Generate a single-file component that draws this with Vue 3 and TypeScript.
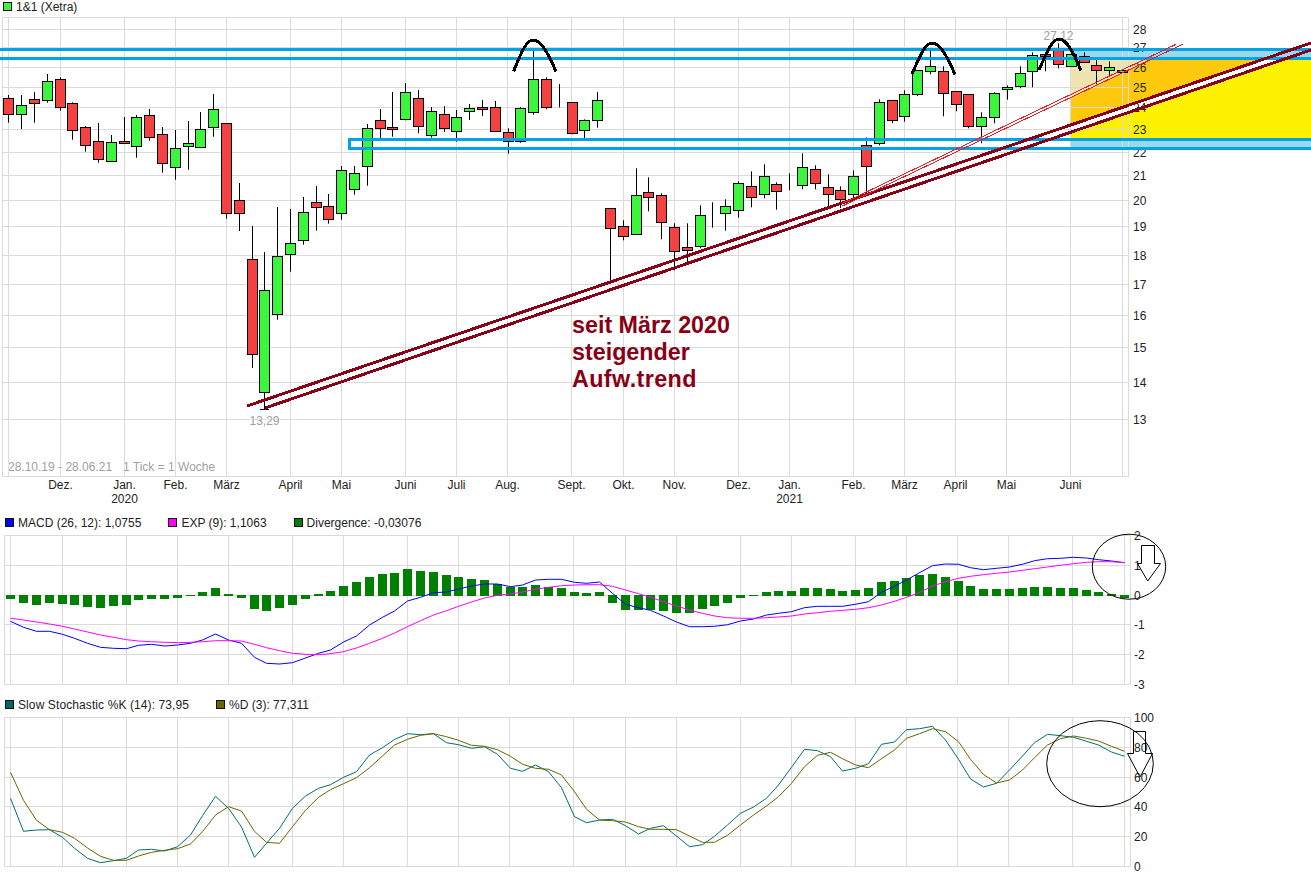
<script setup lang="ts">
type Kind = 'r' | 'g' | 'd'
type Candle = [Kind, number, number, number, number]

const xAt = (i: number): number => 8.5 + 13 * i - Math.floor(i / 5)
const pix = (v: number): number => Math.floor(v) + 0.5

const raw: Candle[] = [
  ['r',98.3,114.3,95,122.7],['g',105.3,114.3,95,129],['r',99.3,103.3,92,122.7],['g',81.3,100.3,74,102.7],
  ['r',79.3,107.3,77.3,110.7],['r',103.3,130.3,102.3,139.7],['r',127.3,145.3,126,151.7],['r',141.3,159.3,123,162.7],
  ['g',142.3,161.3,135,161.3],['r',141.3,143.3,117,143.3],['g',117.3,146.3,115,157.7],['r',115.3,137.3,109,140.7],
  ['r',134.3,163.3,127,172.7],['g',148.3,167.3,130,179.7],['g',143.3,146.3,121,169.7],['g',129.3,147.3,112,147.3],
  ['g',109.3,127.3,94,136.7],['r',123.3,213.3,123.3,218.7],['r',200.3,213.3,183,231],['r',259.3,354.3,226,368],
  ['g',290.3,392.3,252,409.3],['g',256.3,314.3,207,319.7],['g',243.3,254.3,209,271.7],['g',212.3,240.3,197,244.7],
  ['r',202.3,207.3,186,230.7],['r',206.3,219.3,194,223.7],['g',170.3,213.3,166,219.7],['g',173.3,189.3,166,194.7],
  ['g',128.3,166.3,124,185.7],['r',120.3,128.3,109,138],['r',127.3,129.3,92,136.7],['g',92.3,119.3,83,120.3],
  ['r',98.3,126.3,90,133.3],['g',111.3,135.3,107,137.7],['r',114.3,128.3,106,132],['g',117.3,131.3,110,141.7],
  ['g',108.3,111.3,104,120],['r',107.3,109.3,100,116],['r',107.3,131.3,101,131.3],['r',132.3,141.3,128.3,153.7],
  ['g',108.3,141.3,107,142.7],['g',79.3,112.3,50,114.7],['r',79.3,107.3,77.3,109.3],['d',105.3,105.3,84,107.3],
  ['r',102.3,133.3,102.3,134.3],['g',120.3,130.3,119.3,138],['g',100.3,120.3,92,127.7],['r',208.3,228.3,208.3,283],
  ['r',226.3,236.3,220.3,240.3],['g',195.3,234.3,168.3,234.3],['r',192.3,197.3,177.3,211.3],['r',195.3,222.3,193.3,239.3],
  ['r',227.3,251.3,223.3,270.3],['r',247.3,250.3,223.3,263],['g',215.3,246.3,205.3,248.3],['d',216.3,216.3,202.3,227.7],
  ['g',206.3,213.3,199.3,230.7],['g',183.3,210.3,181.3,217.7],['r',186.3,197.3,171.3,207.3],['g',176.3,194.3,164.3,198.3],
  ['r',184.3,191.3,182.3,209.7],['d',189.3,189.3,173.3,190.3],['g',167.3,185.3,153.3,189.3],['r',169.3,183.3,165.3,189.3],
  ['r',187.3,194.3,174.3,208],['r',190.3,199.3,186.3,208],['g',176.3,194.3,170.3,198.3],['r',145.3,166.3,137.3,193.3],
  ['g',102.3,143.3,99.3,145.3],['r',100.3,120.3,100.3,123.3],['g',94.3,116.3,90.3,121.7],['g',70.3,94.3,70.3,96],
  ['g',66.3,71.3,51,74.3],['r',71.3,93.3,66.3,116.3],['r',91.3,104.3,91.3,111.3],['r',94.3,126.3,94.3,128.3],
  ['g',117.3,126.3,112.3,143.3],['g',93.3,117.3,92.3,123.3],['g',87.3,89.3,85.3,99.7],['g',73.3,86.3,66.3,88.3],
  ['g',55.3,71.3,52.3,87.3],['r',54.3,56.3,52,71.3],['r',48.3,64.3,43.3,68.3],['g',54.3,66.3,54.3,66.3],
  ['r',56.3,62.3,52.3,62.3],['r',65.3,70.3,59.3,84.3],['g',67.3,70.3,61.3,76.3],['g',70.3,72.3,70.3,72.3]
]

const candles = raw.map(([kind, t, b, wt, wb], i) => ({
  id: i, kind, x: xAt(i), top: pix(t), height: Math.floor(b) - Math.floor(t), wt, wb
}))

const monthXs = [60.5,124.5,175.5,226.5,290.5,341.5,405.5,456.5,507.5,571.5,623.5,674.5,738.5,789.5,853.5,904.5,955.5,1006.5,1070.5]
const mainVerticals = [2.5, 8.5, ...monthXs, 1122.5, 1128.5]
const lowVerticals = [4.5, 10.5, ...monthXs.map((x) => x + 2), 1124.5, 1130.5]

const months = [
  ['Dez.',60.5],['Jan.',124.5],['Feb.',175.5],['März',226.5],['April',290.5],['Mai',341.5],['Juni',405.5],
  ['Juli',456.5],['Aug.',507.5],['Sept.',571.5],['Okt.',623.5],['Nov.',674.5],['Dez.',738.5],['Jan.',789.5],
  ['Feb.',853.5],['März',904.5],['April',955.5],['Mai',1006.5],['Juni',1070.5]
] as [string, number][]
const years = [['2020',124.5],['2021',789.5]] as [string, number][]

const priceTicks = [
  [28,29.5],[27,47.5],[26,67.5],[25,87.5],[24,107.5],[23,129.5],[22,152.5],[21,175.5],[20,200.5],
  [19,226.5],[18,255.5],[17,284.5],[16,315.5],[15,347.5],[14,382.5],[13,419.5]
]
const macdTicks = [[2,535.5],[1,565.5],[0,595.5],[-1,624.5],[-2,654.5],[-3,684.5]]
const stochTicks = [[100,717.5],[80,747.5],[60,777.5],[40,806.5],[20,836.5],[0,866.5]]

const divergence = [
  599,603,605,603,604,605,607,608,606,605,600,599,599,598,596,592,588,594,598,609,611,608,605,599,594,591,586,582,
  577,574,573,569,571,572,575,577,579,580,584,587,587,585,587,588,592,593,592,603,610,610,610,611,613,613,609,606,
  603,598,596,592,591,591,588,588,589,591,590,588,582,581,578,575,574,577,581,586,589,589,589,588,587,587,588,588,
  590,592,594,598
]
const bars = divergence.map((edge, i) => {
  const up = edge < 596
  return { id: i, x: xAt(i) - 2.5, y: up ? edge : 595, height: up ? 596 - edge : edge - 595 }
})

const macd = [
  621.3,627.3,631.3,631.3,634.3,638.3,643.3,647.3,648.3,648.7,645.3,644.3,646,645,643.3,640,634,640,643.3,657.3,
  663.3,664,662.7,658,653.3,650,642,636,625,617.3,611,601,597.3,592.7,592,589,586,584,584,586.7,585,580,579.3,579.3,
  582.3,583.3,582,593.3,604.3,607.7,610.3,616,622,626.7,626.7,626.3,624.7,621,619,615,613.3,611.7,607.7,606.3,606.3,
  606.3,604.3,601.7,592.3,586.3,580,572.7,565.7,564,564.3,567.7,569.7,568.3,567,564.3,560.7,558.7,558.3,557.3,558,
  559.7,561,562.7
]
const signal = [
  618.3,620,622,624,626.3,629,632,635,637.3,639.7,641,641.7,642.3,642.7,642.3,641.7,640.7,640.7,641,644.3,647.7,
  650.7,653.3,654.3,654.7,653.7,651.7,648,643.3,638.3,633,626.7,620.7,615,610.7,606.3,602,598,595.3,594,592,589.3,
  587.3,585.7,585,584.7,584.7,586.3,590,593.7,597.3,601.7,606,610,613.3,616,617.7,618.3,618.3,617.7,617,616,614,
  612.7,611.3,610.3,609.3,607.7,605,601.3,597.3,592.5,586,581.7,578.3,576.3,574.7,573.3,572,570.3,568.7,567,565.3,
  563.7,562.3,561.7,561.7,562.7
]
const stochK = [
  798.3,831.3,830,829.7,837.3,848.3,858.3,862.7,860.7,858.3,850,849.3,851,846.7,835,815.7,796.3,808.3,827,857.3,
  843.3,828.3,808.3,796,788.3,784.7,777.3,771.7,755,747.7,739.5,733.7,734.7,733.7,742.7,744.7,748.3,746.7,754.3,
  768.3,771.3,765,771.7,787.7,816.7,822.7,820,819.3,825.7,834,828.3,825.7,836,846.7,844.7,836.3,825,813.3,807,798.3,
  785,767.3,749.3,750.7,756.7,771,768.3,763.7,744.3,742,729.7,728.7,726.3,740,759.3,779,787,783.3,770,756,742.7,
  734.3,735.7,737.3,741.3,745,752,756.3
]
const stochD = [
  772.3,800.3,820.3,829.7,832.3,838.3,848,856.3,860.3,860.3,856,852.3,850.3,848.7,844,831.7,815,806.7,811,831.3,
  842.3,843.3,826.7,810.3,797.3,789.7,783.7,777.7,767.7,756,745,739.3,735.3,733.7,736.7,740.3,745.3,746.3,749.7,
  756.3,764.3,768.3,769.3,775,791.7,809.3,820,820.7,822,826.7,829.3,829.3,829.7,836,842.3,842.3,835.3,825,815,806,
  796.7,783.3,766.7,755.3,752.3,758.7,765,767.7,758.7,750,738.3,733.7,728.7,731.7,741.7,759.3,774.5,783,780,770,
  757.7,745,738.7,736,738.3,741,746.3,751.3
]
const toPoints = (vals: number[]): string => vals.map((y, i) => `${xAt(i) + 2},${y}`).join(' ')
const macdPoints = toPoints(macd)
const signalPoints = toPoints(signal)
const kPoints = toPoints(stochK)
const dPoints = toPoints(stochD)
</script>

<template>
  <div class="page">
    <div class="legend legend-main">
      <span class="item"><i class="swatch candle-green"></i>1&amp;1 (Xetra)</span>
    </div>

    <svg class="panel main-panel" viewBox="0 13 1311 501" width="1311" height="501">
      <polygon class="beige" points="1071,60 1150,60 1071,98" />
      <polygon class="orange" points="1071,98 1150,60 1261,60 1071,125" />
      <polygon class="yellow" points="1071,132 1281.6,60 1311,60 1311,139 1071,139" />
      <rect class="sky" x="1071" y="50" width="240" height="9" />
      <rect class="sky" x="1071" y="140" width="240" height="8" />

      <line v-for="x in mainVerticals" :key="x" class="grid" :x1="x" :x2="x" y1="17.5" y2="477" />
      <line class="grid" x1="2.5" x2="1128.5" y1="17.5" y2="17.5" />
      <line class="grid" x1="2.5" x2="1128.5" y1="476.5" y2="476.5" />
      <line v-for="t in priceTicks" :key="t[0]" class="grid" x1="2.5" x2="1128.5" :y1="t[1]" :y2="t[1]" />

      <g v-for="c in candles" :key="c.id">
        <line class="wick" :x1="c.x" :x2="c.x" :y1="c.wt" :y2="c.wb" />
        <rect :class="['body', c.kind]" :x="c.x - 5" :y="c.top" width="10" :height="c.height" />
      </g>
      <line class="wick" x1="260" x2="269" y1="409.5" y2="409.5" />

      <text v-for="t in priceTicks" :key="t[0]" class="label" x="1133" :y="t[1] + 4.5">{{ t[0] }}</text>
      <text v-for="(m, i) in months" :key="i" class="label mid" :x="m[1]" y="489">{{ m[0] }}</text>
      <text v-for="y in years" :key="y[0]" class="label mid" :x="y[1]" y="503">{{ y[0] }}</text>

      <text class="faint" x="8" y="471">28.10.19 - 28.06.21</text>
      <text class="faint" x="123" y="471">1 Tick = 1 Woche</text>
      <text class="faint mid" x="264.5" y="425">13,29</text>
      <text class="faint mid" x="1058.5" y="40">27,12</text>

      <line class="blue" x1="0" x2="1311" y1="49.5" y2="49.5" />
      <line class="blue" x1="0" x2="1311" y1="58.5" y2="58.5" />
      <path class="blue" d="M1311 139.5H349.5V148.5H1311" />

      <line class="trend" x1="247" y1="406" x2="1311" y2="43" />
      <line class="trend" x1="265" y1="408" x2="1311" y2="50" />
      <line class="thin" x1="842" y1="203.6" x2="1176" y2="44.3" />
      <line class="thin" x1="842" y1="206.2" x2="1182.7" y2="44.3" />

      <path class="arc" d="M513.5 71.5C522 50 527 40 533 40C540 40 548 52 556 71.5" />
      <path class="arc" d="M912 74C921 53 926 43 932 43C939 43 947 55 955 74.5" />
      <path class="arc" d="M1039 70C1048 49 1053 39 1059 39C1066 39 1073 51 1081 70.5" />

      <text class="note" x="572" y="333">seit März 2020</text>
      <text class="note" x="572" y="360">steigender</text>
      <text class="note note-wide" x="572" y="387">Aufw.trend</text>
    </svg>

    <div class="legend legend-macd">
      <span class="item"><i class="swatch blue-fill"></i>MACD (26, 12): 1,0755</span>
      <span class="item"><i class="swatch magenta-fill"></i>EXP (9): 1,1063</span>
      <span class="item"><i class="swatch green-fill"></i>Divergence: -0,03076</span>
    </div>

    <svg class="panel" viewBox="0 531 1311 164" width="1311" height="164">
      <line v-for="x in lowVerticals" :key="x" class="grid" :x1="x" :x2="x" y1="535.5" y2="684.5" />
      <line v-for="t in macdTicks" :key="t[0]" class="grid" x1="4.5" x2="1130.5" :y1="t[1]" :y2="t[1]" />
      <rect v-for="b in bars" :key="b.id" class="bar" :x="b.x" :y="b.y" width="9" :height="b.height" />
      <polyline class="series macd" :points="macdPoints" />
      <polyline class="series signal" :points="signalPoints" />
      <text v-for="t in macdTicks" :key="t[0]" class="label" x="1134" :y="t[1] + 4.5">{{ t[0] }}</text>
      <ellipse class="mark" cx="1129" cy="566.7" rx="36.7" ry="32.5" />
      <polygon class="mark" points="1141.5,545.5 1154.5,545.5 1154.5,563.5 1160.5,563.5 1147.7,581 1137.5,563.5 1141.5,563.5" />
    </svg>

    <div class="legend legend-stoch">
      <span class="item stretched"><i class="swatch teal-fill"></i>Slow Stochastic %K (14): 73,95</span>
      <span class="item"><i class="swatch olive-fill"></i>%D (3): 77,311</span>
    </div>

    <svg class="panel" viewBox="0 714 1311 172" width="1311" height="172">
      <line v-for="x in lowVerticals" :key="x" class="grid" :x1="x" :x2="x" y1="717.5" y2="866.5" />
      <line v-for="t in stochTicks" :key="t[0]" class="grid" x1="4.5" x2="1130.5" :y1="t[1]" :y2="t[1]" />
      <polyline class="series k" :points="kPoints" />
      <polyline class="series d-line" :points="dPoints" />
      <text v-for="t in stochTicks" :key="t[0]" class="label" x="1134" :y="t[1] + 4">{{ t[0] }}</text>
      <ellipse class="mark" cx="1100" cy="763.7" rx="53.3" ry="43" />
      <polygon class="mark" points="1133.5,731.5 1145.5,731.5 1145.5,753.5 1152.5,753.5 1140,777 1127.5,753.5 1133.5,753.5" />
    </svg>
  </div>
</template>

<style scoped>
.page {
  width: 1311px;
  height: 886px;
  overflow: hidden;
  background: #fff;
  font-family: "Liberation Sans", Arial, sans-serif;
  font-size: 12px;
  color: #222;
}
.legend {
  display: flex;
  align-items: center;
  gap: 27px;
  white-space: nowrap;
}
.legend-main { height: 13px; padding-left: 3px; }
.legend-macd { height: 17px; padding-left: 5px; }
.legend-stoch { height: 19px; padding-left: 5px; }
.item { display: flex; align-items: center; gap: 4px; }
.stretched { letter-spacing: 0.1px; }
.swatch {
  display: block;
  width: 9px;
  height: 9px;
  box-sizing: border-box;
  border: 1px solid #111;
}
.candle-green { background: #3cf53c; }
.blue-fill { background: #0000ff; }
.magenta-fill { background: #ff00ff; }
.green-fill { background: #008000; }
.teal-fill { background: #006666; }
.olive-fill { background: #666600; }
.panel { display: block; overflow: visible; }

.grid { stroke: #dadada; stroke-width: 1; }
.beige { fill: #efe4b0; }
.orange { fill: #ffc90e; }
.yellow { fill: #fff200; }
.sky { fill: #99d9ea; }
.wick { stroke: #000; stroke-width: 1; }
.body { stroke: #000; stroke-width: 1; }
.r { fill: #f44242; }
.g { fill: #3cf53c; }
.d { fill: #000; }
.label {
  font-family: "Liberation Sans", Arial, sans-serif;
  font-size: 12px;
  fill: #222;
}
.mid { text-anchor: middle; }
.faint {
  font-family: "Liberation Sans", Arial, sans-serif;
  font-size: 12px;
  fill: #a0a0a0;
  stroke: rgba(255, 255, 255, 0.7);
  stroke-width: 2px;
  paint-order: stroke;
}
.blue { fill: none; stroke: #00a2e8; stroke-width: 3; shape-rendering: crispEdges; }
.trend { stroke: #880015; stroke-width: 3; shape-rendering: crispEdges; }
.thin { stroke: #ed1c24; stroke-width: 1; shape-rendering: crispEdges; }
.arc { fill: none; stroke: #000; stroke-width: 3; shape-rendering: crispEdges; }
.note {
  font-family: "Liberation Sans", Arial, sans-serif;
  font-size: 23.3px;
  font-weight: 700;
  fill: #880015;
}
.note-wide { letter-spacing: 0.4px; }
.bar { fill: #008000; }
.series { fill: none; stroke-width: 1; stroke-linejoin: round; }
.macd { stroke: #0000ff; }
.signal { stroke: #ff00ff; }
.k { stroke: #006e6e; }
.d-line { stroke: #666600; }
.mark { fill: none; stroke: #000; stroke-width: 1; }
</style>
